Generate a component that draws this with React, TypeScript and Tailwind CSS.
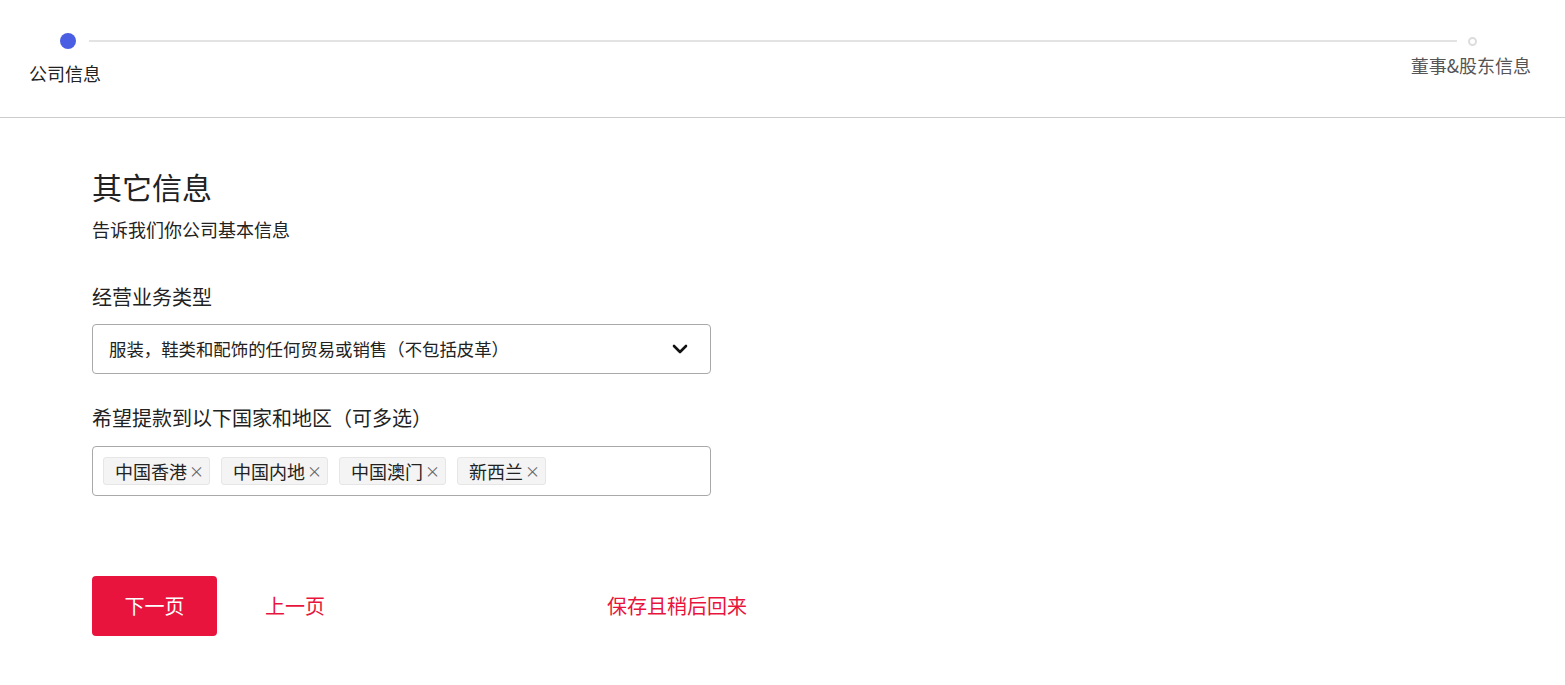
import React from "react";
import { ChevronDown } from "lucide-react";

const tags = ["中国香港", "中国内地", "中国澳门", "新西兰"];

export default function App() {
  return (
    <div
      className="min-h-[685px] w-full bg-white text-[#222]"
      style={{ fontFamily: '"Noto Sans CJK SC", "Noto Sans", sans-serif' }}
    >
      {/* Stepper */}
      <div className="h-[118px] border-b border-[#cccccc]">
        <div className="flex items-center pl-[60px] pr-[88px] pt-[33px]">
          <div className="h-[16px] w-[16px] rounded-full bg-[#4a5ee3]" />
          <div className="ml-[13px] mr-[11px] h-[2px] flex-1 bg-[#e3e3e3]" />
          <div className="h-[9px] w-[9px] rounded-full border-2 border-[#dcdcdc] bg-white" />
        </div>
        <div className="flex items-start justify-between pl-[29px] pr-[34px]">
          <div className="mt-[12px] text-[18px] leading-[24px] text-[#222]">公司信息</div>
          <div className="mt-[4px] text-[18px] leading-[24px] text-[#555]">董事&amp;股东信息</div>
        </div>
      </div>

      {/* Content */}
      <div className="pl-[92px] pt-[48px]">
        <h1 className="text-[30px] font-normal leading-[40px] text-[#222]">其它信息</h1>
        <p className="mt-[11px] text-[18px] leading-[24px] text-[#222]">告诉我们你公司基本信息</p>

        <div className="mt-[42px] text-[20px] leading-[28px] text-[#222]">经营业务类型</div>
        <div className="mt-[13px] flex h-[50px] w-[619px] items-center justify-between rounded-[4px] border border-[#a9a9a9] pl-[16px] pr-[18px]">
          <span className="text-[17.4px] text-[#222]">服装，鞋类和配饰的任何贸易或销售（不包括皮革）</span>
          <ChevronDown size={24} strokeWidth={2.6} className="text-[#111]" />
        </div>

        <div className="mt-[30px] text-[20px] leading-[28px] text-[#222]">希望提款到以下国家和地区（可多选）</div>
        <div className="mt-[14px] flex h-[50px] w-[619px] items-center gap-[11px] rounded-[4px] border border-[#a9a9a9] pl-[10px]">
          {tags.map((t) => (
            <span
              key={t}
              className="flex h-[28px] items-center rounded-[3px] border border-[#e6e6e6] bg-[#f4f4f4] pl-[11px] pr-[5px] text-[18px] text-[#222]"
            >
              {t}
              <span className="ml-[2px] text-[15px] text-[#666]">×</span>
            </span>
          ))}
        </div>

        <div className="mt-[80px] flex items-center">
          <button className="h-[60px] w-[125px] rounded-[4px] bg-[#e8143d] text-[20px] text-white">下一页</button>
          <button className="ml-[48px] text-[20px] text-[#e8143d]">上一页</button>
          <button className="ml-[282px] text-[20px] text-[#e8143d]">保存且稍后回来</button>
        </div>
      </div>
    </div>
  );
}
